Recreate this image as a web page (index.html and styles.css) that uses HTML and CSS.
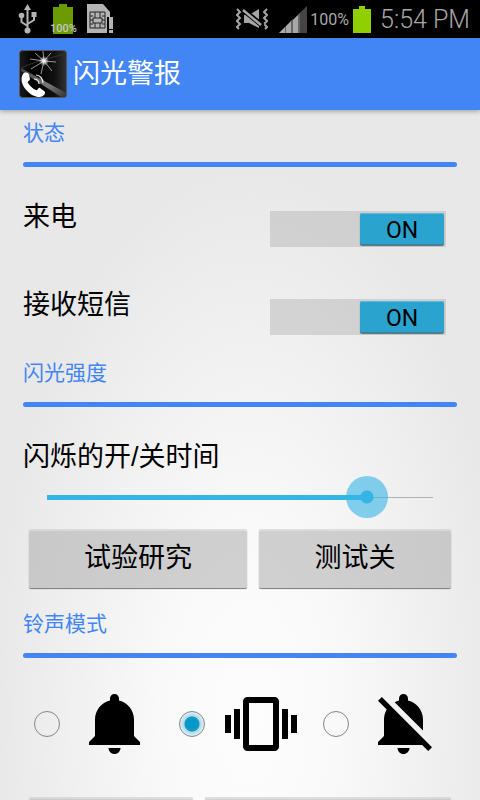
FILE: index.html
```html
<!DOCTYPE html>
<html lang="zh-CN">
<head>
<meta charset="utf-8">
<meta name="viewport" content="width=device-width, initial-scale=1">
<title>闪光警报</title>
<link rel="stylesheet" href="styles.css">
</head>
<body>
<div class="statusbar">
  <div class="status-left">
    <svg class="usb" width="20" height="30" viewBox="0 0 20 30" aria-hidden="true">
      <path d="M9.500 3V26M9.500 22L3.500 18V13M9.500 20L16 16V11" fill="none" stroke="#b4b4b4" stroke-width="2"/>
      <path d="M9.500 0L13 6H6z" fill="#b4b4b4"/><circle cx="3.500" cy="11.500" r="2.800" fill="#b4b4b4"/><rect x="13.500" y="8" width="5" height="5" fill="#b4b4b4"/><circle cx="9.500" cy="26.500" r="3" fill="#b4b4b4"/>
    </svg>
    <div class="mini-battery">
      <svg width="20" height="30" viewBox="0 0 20 30" aria-hidden="true"><path d="M6 0h8v3h6v27H0V3h6z" fill="#6b9b00"/></svg>
      <span class="mini-percent">100%</span>
    </div>
    <svg width="26" height="30" viewBox="0 0 26 30" aria-hidden="true">
      <path d="M0 0H16L23 8V13H20V29H0z" fill="#b4b4b4"/><rect x="22" y="13" width="4" height="12" fill="#b4b4b4"/><rect x="22" y="26" width="4" height="3" fill="#b4b4b4"/>
      <path d="M3 8H18V24H3zM8 8V14M13 8V14M8 19V24M13 19V24M3 12H6M3 16H6M3 20H6M15 12H18M15 16H18M15 20H18M6 14H15V19H6z" fill="none" stroke="#222" stroke-width="1"/>
    </svg>
  </div>
  <div class="status-right">
    <svg width="32" height="22" viewBox="0 0 32 22" aria-hidden="true">
      <path d="M1 1L4 4L1 7L4 10L1 13L4 16L1 19L3 21M31 1L28 4L31 7L28 10L31 13L28 16L31 19L29 21" fill="none" stroke="#a5a5a5" stroke-width="2"/>
      <path d="M8 7H13L23 1V20L13 15H8z" fill="#a5a5a5"/><path d="M6 1L27 18" stroke="#000" stroke-width="5"/><path d="M7 2L25 17" stroke="#a5a5a5" stroke-width="2.500"/>
    </svg>
    <svg class="signal" width="28" height="27" viewBox="0 0 28 27" aria-hidden="true">
      <path d="M0 27L28 0V27z" fill="#444"/><path d="M0 27L6 21V27zM7 27V20L12 15V27zM14 27V14L19 9V27z" fill="#a8a8a8"/><path d="M6 21L7 20V27H6zM12 15L14 13V27H12zM19 9L21 7V27H19z" fill="#666"/>
    </svg>
    <span class="percent">100%</span>
    <svg class="battery" width="18" height="27" viewBox="0 0 18 27" aria-hidden="true"><path d="M6 0h6v3h6v24H0V3h6z" fill="#91d000"/></svg>
    <span class="clock">5:54 PM</span>
  </div>
</div>
<header class="appbar">
  <svg width="48" height="48" viewBox="0 0 48 48" aria-hidden="true">
    <defs>
      <linearGradient id="dark" x1="0" y1="0" x2="1" y2="0"><stop offset="0" stop-color="#1a1a1a"/><stop offset=".3" stop-color="#000"/><stop offset=".75" stop-color="#111"/><stop offset="1" stop-color="#333"/></linearGradient>
      <linearGradient id="edge" x1="0" y1="0" x2="1" y2="1"><stop offset="0" stop-color="#444"/><stop offset=".6" stop-color="#777"/><stop offset="1" stop-color="#333"/></linearGradient>
      <radialGradient id="glow"><stop offset="0" stop-color="#fff"/><stop offset=".35" stop-color="#fff" stop-opacity=".7"/><stop offset="1" stop-color="#fff" stop-opacity="0"/></radialGradient>
    </defs>
    <rect x=".5" y=".5" width="47" height="47" rx="3" fill="url(#dark)" stroke="#555"/>
    <path d="M2 18L47 43V47H42L2 21z" fill="url(#edge)"/>
    <path d="M2 18C15 12 27 9 46 4" fill="none" stroke="#333"/>
    <path d="M25 11L11 9M25 11L12 19M25 11L22 24M25 11L33 21M25 11L37 12M25 11L32 3M25 11L24 1M25 11L16 3" fill="none" stroke="#bbb" stroke-width=".8"/>
    <circle cx="25" cy="11" r="5" fill="url(#glow)"/>
    <path d="M4 24C6 22 9 22 10 25L11 29C11 31 8 31 9 33C11 36 14 39 17 40C19 41 19 37 21 38L25 41C28 43 24 47 21 47C12 48-2 34 4 24z" fill="#fff"/>
    <path d="M15 29C18 29 20 31 20 34M17 25C21 25 24 29 24 33" fill="none" stroke="#eee" stroke-width="1.200"/>
  </svg>
  <h1>闪光警报</h1>
</header>
<main class="content">
  <section>
    <h2>状态</h2>
    <div class="rows">
      <div class="row">
        <label class="row-label" for="calls">来电</label>
        <label class="switch"><input type="checkbox" id="calls" checked><span class="knob">ON</span></label>
      </div>
      <div class="row">
        <label class="row-label" for="sms">接收短信</label>
        <label class="switch"><input type="checkbox" id="sms" checked><span class="knob">ON</span></label>
      </div>
    </div>
  </section>
  <section>
    <h2>闪光强度</h2>
    <div class="strength">
      <label class="row-label" for="time">闪烁的开/关时间</label>
      <div class="slider">
        <div class="track"><div class="fill" style="width: 83%"></div></div>
        <input type="range" id="time" min="0" max="100" value="83">
      </div>
      <div class="buttons test-buttons">
        <button type="button">试验研究</button>
        <button type="button">测试关</button>
      </div>
    </div>
  </section>
  <section>
    <h2>铃声模式</h2>
    <div class="modes">
      <label class="mode"><input type="radio" name="mode" aria-label="铃声">
        <svg width="72" height="72" viewBox="0 0 24 24" aria-hidden="true"><path d="M11.500 22c1.100 0 2-.9 2-2h-4c0 1.100.9 2 2 2zm6.500-6v-5.500c0-3.070-2.130-5.640-5-6.320V3.500c0-.83-.67-1.500-1.500-1.500S10 2.670 10 3.500v.68c-2.870.68-5 3.250-5 6.320V16l-2 2v1h17v-1l-2-2z"/></svg>
      </label>
      <label class="mode"><input type="radio" name="mode" aria-label="振动" checked>
        <svg width="72" height="72" viewBox="0 0 24 24" aria-hidden="true"><path d="M0 15h2V9H0v6zm3 2h2V7H3v10zm19-8v6h2V9h-2zm-3 8h2V7h-2v10zM16.500 3h-9C6.670 3 6 3.670 6 4.500v15c0 .83.67 1.500 1.500 1.500h9c.83 0 1.500-.67 1.500-1.500v-15c0-.83-.67-1.500-1.500-1.500zM16 19H8V5h8v14z"/></svg>
      </label>
      <label class="mode"><input type="radio" name="mode" aria-label="静音">
        <svg width="72" height="72" viewBox="0 0 24 24" aria-hidden="true"><path d="M11.500 22c1.100 0 2-.9 2-2h-4c0 1.100.9 2 2 2zM18 10.500c0-3.070-2.130-5.640-5-6.320V3.500c0-.83-.67-1.500-1.500-1.500S10 2.670 10 3.500v.68c-.51.12-.99.32-1.450.56L18 14.180V10.500zM17.730 19l2 2L21 19.730 4.270 3 3 4.270l2.920 2.920C5.340 8.160 5 9.290 5 10.500V16l-2 2v1h14.730z"/></svg>
      </label>
    </div>
    <div class="buttons mode-buttons">
      <button type="button" aria-label="试验研究"></button>
      <button type="button" aria-label="测试关"></button>
    </div>
  </section>
</main>
</body>
</html>
```
FILE: styles.css
```css
* { box-sizing: border-box; }

body {
  margin: 0;
  height: 100vh;
  overflow: hidden;
  display: flex;
  flex-direction: column;
  font-family: "Liberation Sans", "Noto Sans CJK SC", sans-serif;
  color: #000;
  background: #e8e8e8;
}

svg { display: block; flex: none; }

.statusbar {
  flex: none;
  display: flex;
  justify-content: space-between;
  height: 38px;
  padding: 0 10px 0 18px;
  background: #000;
  color: #a8a8a8;
  font-family: Roboto, sans-serif;
}

.status-left, .status-right { display: flex; align-items: center; }
.status-left { gap: 12px; }

.mini-battery { position: relative; margin: 0 2px 0 3px; }
.mini-percent {
  position: absolute;
  left: -3px;
  bottom: 0;
  font-size: 11px;
  line-height: 10px;
  font-weight: 500;
  color: #c8c8c8;
}

.signal { margin-left: 11px; }
.percent { margin-left: 3px; font-size: 16px; }
.battery { margin-left: 4px; }
.clock { margin-left: 9px; font-size: 25px; font-weight: 300; }

.appbar {
  flex: none;
  display: flex;
  align-items: center;
  gap: 6px;
  height: 72px;
  padding: 0 19px;
  background: #4285f4;
  color: #fff;
  box-shadow: 0 1px 5px rgba(0, 0, 0, .35);
  z-index: 1;
}

h1 { margin: 0; font-size: 27px; line-height: 36px; font-weight: 400; }

.content {
  flex: 1;
  min-height: 0;
  overflow: hidden;
  padding: 0 23px;
  background: radial-gradient(ellipse 54% 80% at 52% 88%, #fdfdfd, #f9f9f9 35%, #e8e8e8);
}

h2 {
  margin: 0;
  padding: 8px 0 14px;
  font-size: 21px;
  line-height: 30px;
  font-weight: 400;
  color: #4285f4;
}

h2::after {
  content: "";
  display: block;
  height: 5px;
  margin: 14px 0 -14px;
  border-radius: 3px;
  background: #4285f4;
}

.rows { padding: 6px 0 1px; }

.row {
  display: flex;
  justify-content: space-between;
  height: 88px;
  padding: 26px 11px 0 0;
}

.row-label { font-size: 27px; line-height: 36px; }

.switch {
  display: grid;
  width: 176px;
  height: 36px;
  margin-top: 12px;
  background: rgba(170, 170, 170, .4);
}

.switch input, .knob { grid-area: 1 / 1; }
.switch input { appearance: none; margin: 0; }

.knob {
  width: 84px;
  height: 32px;
  margin: 2px;
  border-radius: 2px;
  background: #2aa3cf;
  box-shadow: 0 1px 1px rgba(0, 0, 0, .5), inset 0 1px #5ab8da, inset 0 -1px #2389ae;
  font: 23px/36px Roboto, sans-serif;
  text-align: center;
  pointer-events: none;
}

.switch input:checked + .knob { justify-self: end; }

.strength { padding: 32px 0 13px; }
.strength .row-label { display: block; }

.slider { display: grid; align-items: center; height: 44px; margin: 0 3px 10px; }
.track, .slider input { grid-area: 1 / 1; }
.track {
  display: flex;
  align-items: center;
  height: 5px;
  margin: 0 21px;
  background: linear-gradient(#b0b0b0, #b0b0b0) center / 100% 1px no-repeat;
}
.fill { height: 5px; background: #33b5e5; }

.slider input {
  appearance: none;
  width: 100%;
  height: 44px;
  margin: 0;
  background: none;
}

.slider input::-webkit-slider-thumb {
  appearance: none;
  width: 42px;
  height: 42px;
  border-radius: 50%;
  background: radial-gradient(circle, #33b5e5 6px, rgba(51, 181, 229, .6) 7px);
}

.buttons { display: grid; gap: 12px; padding: 0 6px; }
.test-buttons { grid-template-columns: 218fr 192fr; }
.mode-buttons { grid-template-columns: 164fr 246fr; }

button {
  height: 59px;
  padding: 0 0 2px;
  border: 0;
  border-radius: 2px;
  background: rgba(165, 165, 165, .5);
  box-shadow: 0 1px 1px #777, inset 0 2px 1px rgba(255, 255, 255, .3);
  color: #000;
  font: 27px/36px "Liberation Sans", "Noto Sans CJK SC", sans-serif;
}

.modes { display: flex; justify-content: space-between; padding: 30px 16px 37px 11px; }
.mode { display: flex; align-items: center; gap: 20px; }

.mode input {
  appearance: none;
  width: 26px;
  height: 26px;
  margin: 0;
  border: 1px solid #858585;
  border-radius: 50%;
}

.mode input:checked {
  background: radial-gradient(circle, #0099cc 6px, #3b8fae 7px, #a5d8eb 8px, #e4f3f9 12px);
}
```
